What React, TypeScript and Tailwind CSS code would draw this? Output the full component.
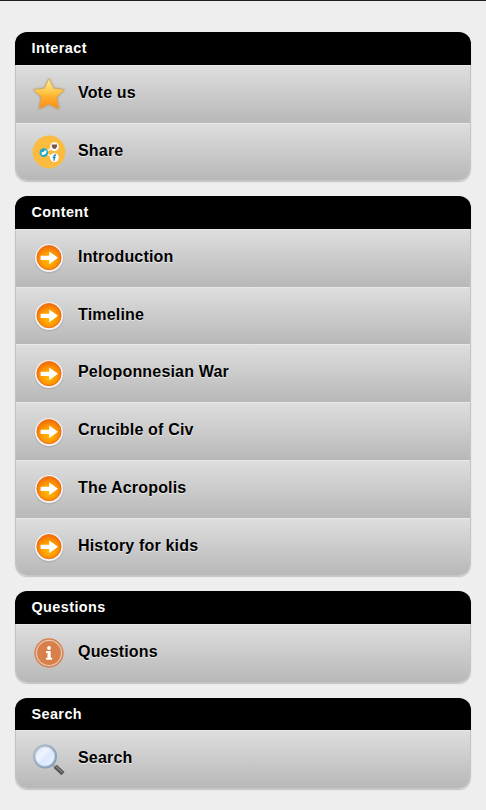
import type { ReactNode } from 'react'

interface Item { label: string; icon: ReactNode }
interface Section { title: string; items: Item[] }

function StarIcon() {
  return (
    <svg viewBox="0 0 34 34" className="w-[34px] h-[34px] drop-shadow-[0_0_1px_#a08a58]">
      <defs>
        <linearGradient id="star" x1="0" y1="0" x2="0" y2="1">
          <stop offset="0" stopColor="#fff0a0" />
          <stop offset="0.45" stopColor="#ffc648" />
          <stop offset="0.6" stopColor="#ffae2c" />
          <stop offset="1" stopColor="#ff8c14" />
        </linearGradient>
      </defs>
      <path
        d="M17 1.8 21.7 11.5 32.2 12.8 24.6 20.3 26.7 31.8 17 27.1 7.3 31.8 9.4 20.3 1.8 12.8 12.3 11.5Z"
        fill="url(#star)"
        stroke="#dfa850"
        strokeWidth="0.6"
        strokeLinejoin="round"
      />
    </svg>
  )
}

function ShareIcon() {
  return (
    <svg viewBox="0 0 34 34" className="w-[34px] h-[34px]">
      <circle cx="17" cy="17" r="16.4" fill="#fbbb3e" />
      <path d="M22.3 11.8 12 17.8 22.3 22.7" fill="none" stroke="#fff" strokeWidth="1.3" />
      <circle cx="11.8" cy="17.6" r="4.3" fill="#22a9c9" />
      <path d="M9.2 19.5c3 1.3 5.6-.6 5.4-3.9l-1.8-.1-1.4 1.7-2-.3.7 1.4z" fill="#fff" />
      <circle cx="22.4" cy="11.7" r="4.4" fill="#fff" />
      <path d="M19.8 9.6h5.2v1.7l-1.2 2.5h-2.8l-1.2-2.5z" fill="#79564c" />
      <circle cx="22.4" cy="22.6" r="4.4" fill="#fff" />
      <path d="M24 20h-.8c-1 0-1.1.5-1.1 1.5v4.3M20.7 22.4h3" fill="none" stroke="#168fc0" strokeWidth="1.4" />
    </svg>
  )
}

function ArrowIcon() {
  return (
    <svg viewBox="0 0 34 34" className="w-[34px] h-[34px]">
      <defs>
        <radialGradient id="arrow" cx="0.5" cy="0.6" r="0.55">
          <stop offset="0" stopColor="#ffc000" />
          <stop offset="0.55" stopColor="#ff9c00" />
          <stop offset="1" stopColor="#f37208" />
        </radialGradient>
      </defs>
      <circle cx="17" cy="17.9" r="14.6" fill="#777" opacity="0.22" />
      <circle cx="17" cy="17" r="14" fill="#f3f3f3" />
      <circle cx="17" cy="16.6" r="12.1" fill="url(#arrow)" stroke="#e8640c" strokeWidth="0.8" />
      <path d="M8.6 14.7h8.6v-4.3l8.8 6.4-8.8 6.4v-4.3H8.6z" fill="#fff" />
    </svg>
  )
}

function InfoIcon() {
  return (
    <svg viewBox="0 0 34 34" className="w-[34px] h-[34px]">
      <circle cx="17" cy="17" r="13.9" fill="#e3c8b8" stroke="#d9804d" strokeWidth="1.5" />
      <circle cx="17" cy="17" r="11.9" fill="#d9804a" />
      <circle cx="17" cy="12" r="1.9" fill="#fff" />
      <path d="M14 15h4.7v6.8h1.4v1.9h-6.1v-1.9h1.5v-4.9h-1.5z" fill="#fff" />
    </svg>
  )
}

function SearchIcon() {
  return (
    <svg viewBox="0 0 34 34" className="w-[34px] h-[34px]">
      <defs>
        <linearGradient id="lens" x1="0" y1="0" x2="1" y2="1">
          <stop offset="0" stopColor="#d3e1fa" />
          <stop offset="0.4" stopColor="#eff4ff" />
          <stop offset="0.55" stopColor="#dce8ff" />
          <stop offset="1" stopColor="#eef4ff" />
        </linearGradient>
        <linearGradient id="rim" x1="0" y1="0" x2="1" y2="1">
          <stop offset="0" stopColor="#b4bec6" />
          <stop offset="1" stopColor="#7f9ab6" />
        </linearGradient>
      </defs>
      <path d="m20.5 21.5 3.5 3.2" stroke="#a6a6a6" strokeWidth="2.6" />
      <path d="m23.2 23.4 7.8 7.3" stroke="#555" strokeWidth="4.4" />
      <path d="m24 23.5 6.4 6" stroke="#a0a0a0" strokeWidth="1" />
      <circle cx="13" cy="13.4" r="11" fill="url(#lens)" stroke="url(#rim)" strokeWidth="2.2" />
      <circle cx="13" cy="13.4" r="9.6" fill="none" stroke="#b9cbe4" strokeWidth="0.8" />
    </svg>
  )
}

const sections: Section[] = [
  {
    title: 'Interact',
    items: [
      { label: 'Vote us', icon: <StarIcon /> },
      { label: 'Share', icon: <ShareIcon /> },
    ],
  },
  {
    title: 'Content',
    items: ['Introduction', 'Timeline', 'Peloponnesian War', 'Crucible of Civ', 'The Acropolis', 'History for kids']
      .map((label) => ({ label, icon: <ArrowIcon /> })),
  },
  { title: 'Questions', items: [{ label: 'Questions', icon: <InfoIcon /> }] },
  { title: 'Search', items: [{ label: 'Search', icon: <SearchIcon /> }] },
]

export default function App() {
  return (
    <div className="h-[810px] overflow-hidden border-t border-[#231f20] bg-[#eeeeee] px-[15px] pt-[31.4px] font-['Liberation_Sans',Arial,sans-serif] font-bold">
      <div className="flex flex-col gap-[15px]">
        {sections.map((section) => (
          <section
            key={section.title}
            className="overflow-hidden rounded-xl shadow-[0_1px_1px_#c4c4c4]"
          >
            <h2 className="flex h-[32.5px] items-center bg-black pl-[16.5px] pt-px text-[14.4px] tracking-[0.42px] text-white">
              {section.title}
            </h2>
            <ul className="overflow-hidden rounded-b-xl border-x border-b border-[#c4c4c4]">
              {section.items.map((item) => (
                <li
                  key={item.label}
                  className="flex h-[57.75px] items-center border-t border-[#e8e8e8] bg-linear-to-b from-[#dedede] to-[#b8b8b8] pl-[15.5px]"
                >
                  <span>{item.icon}</span>
                  <span className="-mt-[3px] ml-[12.5px] text-base tracking-[0.18px] text-black [text-shadow:0_1px_1px_#eeeeee]">
                    {item.label}
                  </span>
                </li>
              ))}
            </ul>
          </section>
        ))}
      </div>
    </div>
  )
}
